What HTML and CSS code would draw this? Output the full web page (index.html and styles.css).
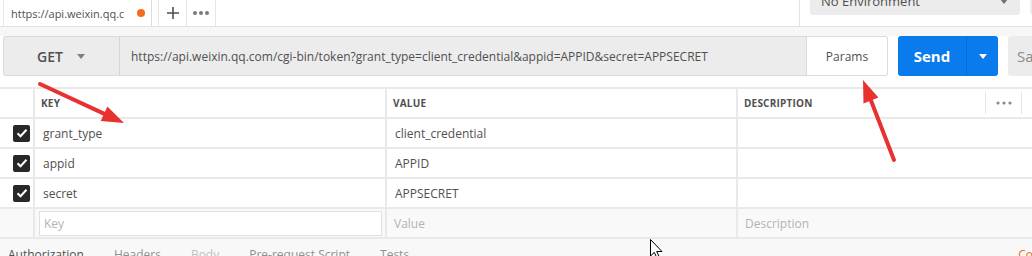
FILE: index.html
```html
<!DOCTYPE html>
<html>
<head>
<meta charset="utf-8">
<link rel="stylesheet" href="styles.css">
</head>
<body>
<div class="page">
  <div class="topbar">
    <div class="tabs-area">
      <div class="tab"><span class="tab-title">https://api.weixin.qq.com</span><span class="dot"></span></div>
      <div class="tab-btn plus">
        <svg width="14" height="14" viewBox="0 0 14 14"><path d="M7 1v12M1 7h12" stroke="#505050" stroke-width="1.6"/></svg>
      </div>
      <div class="tab-btn more">
        <svg width="18" height="6" viewBox="0 0 18 6"><circle cx="3" cy="3" r="2" fill="#7a7a7a"/><circle cx="9" cy="3" r="2" fill="#7a7a7a"/><circle cx="15" cy="3" r="2" fill="#7a7a7a"/></svg>
      </div>
    </div>
    <div class="env-area">
      <div class="env"><span>No Environment</span><span class="env-caret"></span></div>
      <div class="env-side"></div>
    </div>
  </div>
  <div class="strip"></div>
  <div class="request-row">
    <div class="method"><span class="method-label">GET</span><span class="caret"></span></div>
    <div class="url">https://api.weixin.qq.com/cgi-bin/token?grant_type=client_credential&amp;appid=APPID&amp;secret=APPSECRET</div>
    <div class="params">Params</div>
    <div class="send"><span class="send-label">Send</span><span class="send-drop"><span class="caret white"></span></span></div>
    <div class="save">Save</div>
  </div>
  <div class="table">
    <div class="cell"></div>
    <div class="cell head">KEY</div>
    <div class="cell head">VALUE</div>
    <div class="cell head desc-head">DESCRIPTION<span class="head-more"><svg width="16" height="4" viewBox="0 0 16 4"><circle cx="2" cy="2" r="1.6" fill="#8a8a8a"/><circle cx="8" cy="2" r="1.6" fill="#8a8a8a"/><circle cx="14" cy="2" r="1.6" fill="#8a8a8a"/></svg></span></div>

    <div class="cell chk"><span class="box"><svg width="12" height="10" viewBox="0 0 12 10"><path d="M1.5 5.2l3 3 6-6.4" fill="none" stroke="#fff" stroke-width="2"/></svg></span></div>
    <div class="cell">grant_type</div>
    <div class="cell">client_credential</div>
    <div class="cell"></div>

    <div class="cell chk"><span class="box"><svg width="12" height="10" viewBox="0 0 12 10"><path d="M1.5 5.2l3 3 6-6.4" fill="none" stroke="#fff" stroke-width="2"/></svg></span></div>
    <div class="cell">appid</div>
    <div class="cell">APPID</div>
    <div class="cell"></div>

    <div class="cell chk"><span class="box"><svg width="12" height="10" viewBox="0 0 12 10"><path d="M1.5 5.2l3 3 6-6.4" fill="none" stroke="#fff" stroke-width="2"/></svg></span></div>
    <div class="cell">secret</div>
    <div class="cell">APPSECRET</div>
    <div class="cell"></div>

    <div class="cell new"></div>
    <div class="cell new key-cell"><div class="key-input">Key</div></div>
    <div class="cell new ph">Value</div>
    <div class="cell new ph">Description</div>
  </div>
  <div class="subtabs">
    <span class="st active">Authorization</span>
    <span class="st">Headers</span>
    <span class="st faint">Body</span>
    <span class="st">Pre-request Script</span>
    <span class="st">Tests</span>
    <span class="cookies">Cookies</span>
  </div>
  <svg class="overlay" width="1032" height="256" viewBox="0 0 1032 256">
    <line x1="40" y1="84" x2="106" y2="114.6" stroke="#e8322f" stroke-width="4" stroke-linecap="round"/>
    <polygon points="124,123 100.7,121 107.4,106.5" fill="#e8322f"/>
    <line x1="894" y1="160" x2="870" y2="98" stroke="#e8322f" stroke-width="4" stroke-linecap="round"/>
    <polygon points="863,80 878.4,97.6 863.5,103.4" fill="#e8322f"/>
    <path d="M650.5 239.5v16.5l3.8-3.6 2.6 5.5 2.3-1-2.5-5.4h5.3z" fill="#fff" stroke="#000" stroke-width="1"/>
  </svg>
</div>
</body>
</html>
```

FILE: styles.css
```css
* { box-sizing: border-box; }
html, body { margin: 0; padding: 0; }
body {
  font-family: "Open Sans", "Liberation Sans", sans-serif;
  color: #505050;
  background: #fff;
}
.page {
  position: relative;
  width: 1032px;
  height: 256px;
  overflow: hidden;
}
.topbar {
  display: flex;
  height: 27px;
  border-bottom: 1px solid #e3e3e3;
  background: #fff;
}
.tabs-area {
  flex: 0 0 800px;
  display: flex;
  border-right: 1px solid #e3e3e3;
}
.tab {
  flex: 0 0 149px;
  margin-left: 3px;
  border-left: 1px solid #e6e6e6;
  border-right: 1px solid #dcdcdc;
  display: flex;
  align-items: center;
  padding-left: 7px;
  font-size: 11px;
  color: #505050;
  white-space: nowrap;
  overflow: hidden;
}
.tab-title { flex: 0 0 113px; overflow: hidden; }
.dot {
  flex: 0 0 8px;
  height: 8px;
  border-radius: 50%;
  background: #f26b21;
  margin-left: 13px;
}
.tab-btn {
  flex: 0 0 29px;
  display: flex;
  align-items: center;
  justify-content: center;
  border-right: 1px solid #e6e6e6;
}
.tab-btn.plus { margin-left: 6px; border-left: 1px solid #e6e6e6; }
.env-area {
  flex: 1;
  display: flex;
  padding-left: 10px;
}
.env {
  flex: 0 0 210px;
  height: 28px;
  margin-top: -13px;
  background: #ececec;
  border-radius: 3px;
  display: flex;
  align-items: center;
  justify-content: space-between;
  padding: 0 12px 0 11px;
  font-size: 13px;
  color: #505050;
}
.env-caret {
  width: 0; height: 0;
  border-left: 4px solid transparent;
  border-right: 4px solid transparent;
  border-top: 5px solid #707070;
}
.env-side {
  flex: 0 0 20px;
  margin-left: 10px;
  height: 28px;
  margin-top: -13px;
  background: #ececec;
  border-radius: 3px;
}
.strip {
  height: 9px;
  background: #f7f7f7;
}
.request-row {
  display: flex;
  height: 41px;
  padding: 0 0 0 3px;
  background: #fff;
}
.method {
  flex: 0 0 116px;
  height: 40px;
  background: #ececec;
  border: 1px solid #dadada;
  border-right: none;
  border-radius: 3px 0 0 3px;
  display: flex;
  align-items: center;
  padding-left: 33px;
}
.method-label { font-size: 14px; font-weight: 600; color: #505050; }
.caret {
  width: 0; height: 0;
  border-left: 4px solid transparent;
  border-right: 4px solid transparent;
  border-top: 5px solid #808080;
  margin-left: 14px;
}
.caret.white { border-top-color: #fff; margin-left: 0; }
.url {
  flex: 0 0 688px;
  height: 40px;
  background: #ececec;
  border: 1px solid #dadada;
  border-left: 1px solid #d6d6d6;
  display: flex;
  align-items: center;
  padding-left: 11px;
  font-size: 12px;
  color: #505050;
  white-space: nowrap;
}
.params {
  flex: 0 0 81px;
  height: 40px;
  background: #fff;
  border: 1px solid #dadada;
  border-left: none;
  border-radius: 0 3px 3px 0;
  display: flex;
  align-items: center;
  justify-content: center;
  font-size: 12px;
  color: #505050;
}
.send {
  margin-left: 10px;
  flex: 0 0 100px;
  height: 40px;
  background: #097bed;
  border-radius: 3px;
  display: flex;
  color: #fff;
}
.send-label {
  flex: 0 0 69px;
  display: flex;
  align-items: center;
  justify-content: center;
  font-size: 15px;
  font-weight: 700;
  border-right: 1px solid #0a69cf;
}
.send-drop {
  flex: 1;
  display: flex;
  align-items: center;
  justify-content: center;
}
.save {
  margin-left: 10px;
  flex: 0 0 60px;
  height: 40px;
  background: #ececec;
  border-radius: 3px;
  display: flex;
  align-items: center;
  padding-left: 9px;
  font-size: 15px;
  color: #8a8a8a;
}
.table {
  margin-top: 10px;
  display: grid;
  grid-template-columns: 33px 350px 349px 1fr;
  grid-auto-rows: 28px;
  gap: 2px;
  padding-top: 2px;
  padding-bottom: 2px;
  background: #e9e9e9;
}
.cell {
  background: #fff;
  display: flex;
  align-items: center;
  padding-left: 8px;
  font-size: 12px;
  color: #505050;
  white-space: nowrap;
}
.head {
  font-size: 10px;
  font-weight: 700;
  color: #505050;
  padding-left: 6px;
  letter-spacing: 0.2px;
}
.desc-head { position: relative; }
.head-more {
  margin-left: auto;
  width: 37px;
  height: 22px;
  margin-right: 10px;
  border-left: 1px solid #e6e6e6;
  border-right: 1px solid #e6e6e6;
  display: flex;
  align-items: center;
  justify-content: center;
}
.chk { padding-left: 13px; }
.box {
  width: 17px;
  height: 17px;
  background: #282828;
  border-radius: 2px;
  display: flex;
  align-items: center;
  justify-content: center;
}
.new { background: #f9f9f9; color: #b3b3b3; }
.key-cell { padding-left: 4px; }
.key-input {
  width: 343px;
  height: 25px;
  background: #fff;
  border: 1px solid #e0e0e0;
  display: flex;
  align-items: center;
  padding-left: 4px;
  color: #b3b3b3;
  font-size: 12px;
}
.ph { padding-left: 7px; }
.subtabs {
  height: 20px;
  background: #f8f8f8;
  display: flex;
  align-items: flex-start;
  padding: 7px 0 0 8px;
  font-size: 12px;
  white-space: nowrap;
}
.st { margin-right: 30px; color: #909090; }
.st.active { color: #505050; }
.st.faint { color: #c0c0c0; }
.cookies { margin-left: auto; margin-right: -30px; color: #f26b21; }
.overlay {
  position: absolute;
  left: 0;
  top: 0;
  pointer-events: none;
}
```
